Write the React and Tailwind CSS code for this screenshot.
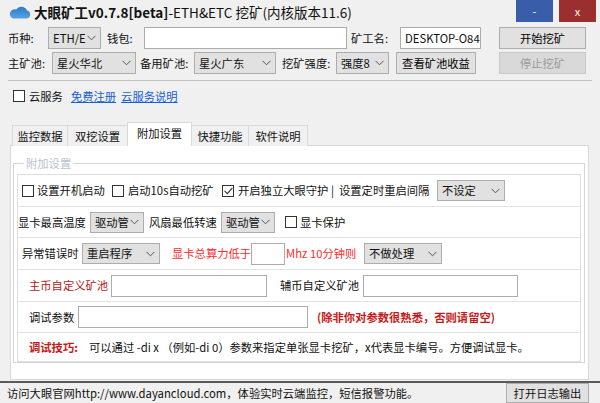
import React from 'react'

function Chevron() {
  return (
    <svg width="9" height="6" viewBox="0 0 9 6" className="shrink-0">
      <path d="M0.5 0.8 L4.5 4.8 L8.5 0.8" fill="none" stroke="#555" strokeWidth="1" />
    </svg>
  )
}

function Combo({ w, h = 'h-[21px]', className = '', children }) {
  return (
    <div className={`${w} ${h} ${className} shrink-0 flex items-center justify-between bg-[#e1e1e1] border border-[#adadad] pl-[4px] pr-[4px]`}>
      <span className="whitespace-nowrap">{children}</span>
      <Chevron />
    </div>
  )
}

function Field({ w, className = '', children }) {
  return (
    <div className={`${w} ${className} h-[22px] shrink-0 bg-white border border-[#acacac] flex items-center px-[4px] whitespace-nowrap`}>
      {children}
    </div>
  )
}

function Check({ checked, className = '' }) {
  return (
    <span className={`${className} w-[12px] h-[12px] shrink-0 border border-[#333] bg-white flex items-center justify-center`}>
      {checked && (
        <svg width="9" height="8" viewBox="0 0 9 8">
          <path d="M0.6 3.8 L3.3 6.6 L8.4 0.8" fill="none" stroke="#333" strokeWidth="1.1" />
        </svg>
      )}
    </span>
  )
}

function L({ className = '', children }) {
  return <span className={`${className} shrink-0 whitespace-pre`}>{children}</span>
}

function Btn({ w, className = '', disabled, children }) {
  return (
    <div
      className={`${w} ${className} h-[22px] shrink-0 flex items-center justify-center whitespace-nowrap border ${
        disabled ? 'bg-[#d9d9d9] border-[#c8c8c8] text-[#9a9a9a]' : 'bg-[#e1e1e1] border-[#adadad] text-black'
      }`}
    >
      {children}
    </div>
  )
}

const tabs = [
  { label: '监控数据', w: 'w-[56px]' },
  { label: '双挖设置', w: 'w-[61px]' },
  { label: '附加设置', w: 'w-[65px]', active: true },
  { label: '快捷功能', w: 'w-[58px]' },
  { label: '软件说明', w: 'w-[60px]' },
]

export default function App() {
  return (
    <div className="w-[600px] h-[403px] overflow-hidden bg-[#f0f0f0] text-[11.3px] leading-[15px] text-[#111] font-['Microsoft_YaHei','Noto_Sans_CJK_SC',sans-serif] flex flex-col">
      {/* title bar */}
      <div className="h-[27px] flex items-start shrink-0">
        <svg width="23" height="14" viewBox="0 0 23 14" className="ml-[8px] mt-[5px]">
          <defs>
            <linearGradient id="cl" x1="0" y1="0" x2="0" y2="1">
              <stop offset="0" stopColor="#2a78c8" />
              <stop offset="1" stopColor="#5aa2e0" />
            </linearGradient>
          </defs>
          <path d="M5 13.5 H18.5 A4 4 0 0 0 19 5.6 A6 6 0 0 0 8.2 4.6 A4.5 4.5 0 0 0 5 13.5 Z" fill="url(#cl)" />
        </svg>
        <div className="ml-[3px] mt-[3px] text-[13.5px] leading-[18px] whitespace-nowrap">
          <span className="font-bold">大眼矿工v0.7.8[beta]</span>
          <span>-ETH&amp;ETC 挖矿(内核版本11.6)</span>
        </div>
        <div className="ml-auto flex gap-[6px] mr-[4px]">
          <div className="w-[37px] h-[22px] bg-[#3a5da9] text-white flex items-center justify-center text-[11px]">-</div>
          <div className="w-[37px] h-[22px] bg-[#9b2f2f] text-white flex items-center justify-center text-[11px]">x</div>
        </div>
      </div>

      {/* row 1 */}
      <div className="h-[22px] flex items-center shrink-0 pl-[8px]">
        <L className="w-[40px]">币种:</L>
        <Combo w="w-[53px]" h="h-[22px]">ETH/E</Combo>
        <L className="ml-[6px] w-[37px]">钱包:</L>
        <Field w="w-[203px]" />
        <L className="ml-[4px] w-[49px]">矿工名:</L>
        <Field w="w-[81px]">DESKTOP-O84</Field>
        <Btn w="w-[87px]" className="ml-[18px]">开始挖矿</Btn>
      </div>

      {/* row 2 */}
      <div className="h-[22px] mt-[3px] flex items-center shrink-0 pl-[8px]">
        <L className="w-[44px]">主矿池:</L>
        <Combo w="w-[84px]" h="h-[22px]">星火华北</Combo>
        <L className="ml-[4px] w-[54px]">备用矿池:</L>
        <Combo w="w-[82px]" h="h-[22px]">星火广东</Combo>
        <L className="ml-[6px] w-[54px]">挖矿强度:</L>
        <Combo w="w-[53px]" h="h-[22px]">强度8</Combo>
        <Btn w="w-[80px]" className="ml-[7px]">查看矿池收益</Btn>
        <Btn w="w-[87px]" className="ml-[23px]" disabled>停止挖矿</Btn>
      </div>

      <div className="mt-[6px] mx-[8px] h-px bg-[#c3c3c3] shrink-0" />

      {/* cloud service */}
      <div className="h-[16px] mt-[7px] flex items-center shrink-0 pl-[13px]">
        <Check />
        <L className="ml-[4px]">云服务</L>
        <L className="ml-[8px] text-[#1560d0] underline">免费注册</L>
        <L className="ml-[5px] text-[#1560d0] underline">云服务说明</L>
      </div>

      {/* tabs */}
      <div className="mt-[18px] ml-[12px] h-[24px] -mb-px flex items-end shrink-0 relative z-10">
        {tabs.map((t, i) =>
          t.active ? (
            <div
              key={t.label}
              className={`${t.w} h-[24px] -ml-px bg-white border border-b-0 border-[#d9d9d9] flex items-center justify-center pb-[2px]`}
            >
              {t.label}
            </div>
          ) : (
            <div
              key={t.label}
              className={`${t.w} h-[21px] ${i ? '-ml-px' : ''} bg-[#f0f0f0] border border-b-0 border-[#d9d9d9] flex items-center justify-center`}
            >
              {t.label}
            </div>
          )
        )}
      </div>

      {/* panel */}
      <div className="ml-[10px] w-[579px] h-[235px] shrink-0 bg-white border border-[#d9d9d9] flex flex-col">
        <fieldset className="mt-[9px] ml-[2px] mr-[3px] border border-[#d5d5d5] pb-0">
          <legend className="ml-[10px] px-[2px] text-[#b8c3cf] leading-[17px]">附加设置</legend>
          <div className="mt-[2px] mx-[3px] border border-[#dedede] flex flex-col">
            {/* r1 */}
            <div className="h-[32px] border-b border-[#e3e3e3] flex items-center pl-[4px]">
              <Check />
              <L className="ml-[3px] w-[68px]">设置开机启动</L>
              <Check className="ml-[7px]" />
              <L className="ml-[4px] w-[86px]">启动10s自动挖矿</L>
              <Check className="ml-[8px]" checked />
              <L className="ml-[4px] w-[195px]">开启独立大眼守护 |  设置定时重启间隔</L>
              <Combo w="w-[68px]" className="ml-[4px]">不设定</Combo>
            </div>
            {/* r2 */}
            <div className="h-[31px] border-b border-[#e3e3e3] flex items-center">
              <L className="w-[68px]">显卡最高温度</L>
              <Combo w="w-[54px]" className="ml-[4px]">驱动管</Combo>
              <L className="ml-[5px] w-[68px]">风扇最低转速</L>
              <Combo w="w-[54px]" className="ml-[4px]">驱动管</Combo>
              <Check className="ml-[10px]" />
              <L className="ml-[3px]">显卡保护</L>
            </div>
            {/* r3 */}
            <div className="h-[32px] border-b border-[#e3e3e3] flex items-center pl-[4px]">
              <L className="w-[57px]">异常错误时</L>
              <Combo w="w-[78px]" className="ml-[3px]">重启程序</Combo>
              <L className="ml-[12px] w-[79px] text-[#ff2b2b]">显卡总算力低于</L>
              <Field w="w-[34px]" />
              <L className="ml-[1px] w-[72px] text-[#ff2b2b]">Mhz 10分钟则</L>
              <Combo w="w-[78px]" className="ml-[6px]">不做处理</Combo>
            </div>
            {/* r4 */}
            <div className="h-[32px] border-b border-[#e3e3e3] flex items-center pl-[11px]">
              <L className="w-[80px] text-[#b22020]">主币自定义矿池</L>
              <Field w="w-[156px]" className="ml-[2px]" />
              <L className="ml-[13px] w-[80px]">辅币自定义矿池</L>
              <Field w="w-[155px]" className="ml-[3px]" />
            </div>
            {/* r5 */}
            <div className="h-[31px] border-b border-[#e3e3e3] flex items-center pl-[11px]">
              <L className="w-[47px]">调试参数</L>
              <Field w="w-[230px]" className="ml-[2px]" />
              <L className="ml-[9px] font-bold text-[#c41a1a]">(除非你对参数很熟悉，否则请留空)</L>
            </div>
            {/* r6 */}
            <div className="h-[28px] flex items-center pl-[11px]">
              <L className="w-[50px] font-bold text-[#c41a1a]">调试技巧:</L>
              <L className="ml-[10px]">可以通过 -di x （例如-di 0）参数来指定单张显卡挖矿，x代表显卡编号。方便调试显卡。</L>
            </div>
          </div>
        </fieldset>
      </div>

      {/* status bar */}
      <div className="mt-[1px] h-[2px] bg-[#5a5a5a] shrink-0" />
      <div className="h-[20px] flex items-center justify-between shrink-0">
        <L className="pl-[7px]">访问大眼官网http://www.dayancloud.com，体验实时云端监控，短信报警功能。</L>
        <div className="w-[83px] h-[20px] mr-[11px] bg-[#e1e1e1] border border-[#adadad] flex items-center justify-center whitespace-nowrap">打开日志输出</div>
      </div>
    </div>
  )
}
